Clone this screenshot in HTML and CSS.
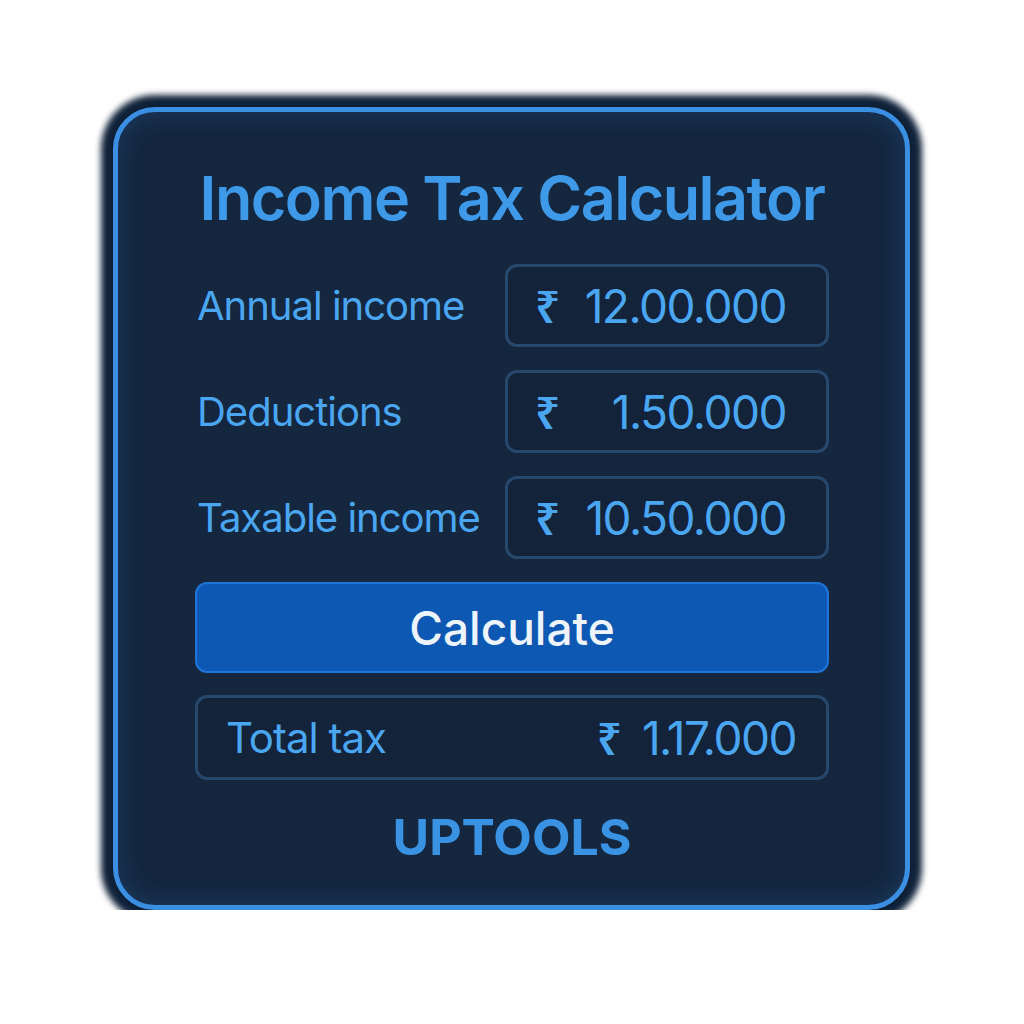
FILE: index.html
```html
<!DOCTYPE html>
<html lang="en">
<head>
<meta charset="utf-8">
<title>Income Tax Calculator</title>
<link rel="stylesheet" href="styles.css">
</head>
<body>
<div class="page">
  <div class="card">
    <h1 class="title">Income Tax Calculator</h1>
    <div class="rows">
      <div class="row">
        <span class="label">Annual income</span>
        <div class="field"><span class="cur">₹</span><span class="num">12.00.000</span></div>
      </div>
      <div class="row">
        <span class="label">Deductions</span>
        <div class="field"><span class="cur">₹</span><span class="num">1.50.000</span></div>
      </div>
      <div class="row">
        <span class="label">Taxable income</span>
        <div class="field"><span class="cur">₹</span><span class="num">10.50.000</span></div>
      </div>
    </div>
    <button class="btn">Calculate</button>
    <div class="total">
      <span class="label total-label">Total tax</span>
      <span class="total-val"><span class="cur">₹</span><span class="num">1.17.000</span></span>
    </div>
    <div class="brand">UPTOOLS</div>
  </div>
</div>
</body>
</html>
```

FILE: styles.css
```css
html, body {
  margin: 0;
  padding: 0;
  background: #ffffff;
}
body {
  font-family: Inter, "Noto Sans", "DejaVu Sans", sans-serif;
}
.page {
  padding: 107px 0 0 113px;
}
.card {
  box-sizing: border-box;
  width: 797px;
  height: 803px;
  border: 5px solid #3a8fe3;
  border-radius: 42px;
  background: #14273f;
  box-shadow: 0 0 0 2px #0e1e33, 0 0 6px 12px #10223a, inset 0 0 24px rgba(50, 120, 200, 0.25);
  padding: 50px 76px 0 77px;
  display: flex;
  flex-direction: column;
}
.card > * {
  flex-shrink: 0;
}
.title {
  margin: 0;
  font-size: 61px;
  line-height: 72px;
  font-weight: 600;
  color: #3e99e9;
  text-align: center;
  letter-spacing: -1.5px;
  white-space: nowrap;
}
.rows {
  margin-top: 30px;
  display: flex;
  flex-direction: column;
  gap: 23px;
}
.row {
  display: flex;
  align-items: center;
  justify-content: space-between;
}
.label {
  font-size: 40px;
  color: #4aa6f0;
  letter-spacing: -1px;
  padding-left: 2px;
  white-space: nowrap;
}
.field {
  box-sizing: border-box;
  width: 324px;
  height: 83px;
  border: 3px solid #27486d;
  border-radius: 12px;
  background: #13233a;
  display: flex;
  align-items: center;
  justify-content: space-between;
  padding: 0 40px 0 27px;
}
.cur {
  font-family: "Noto Sans", "DejaVu Sans", sans-serif;
  font-size: 44px;
  font-weight: 600;
  color: #4aa6f0;
}
.num {
  font-size: 46px;
  color: #4aa6f0;
  letter-spacing: -1.5px;
  white-space: nowrap;
}
.btn {
  margin-top: 23px;
  height: 91px;
  width: 100%;
  border: 2px solid #1f74d8;
  border-radius: 12px;
  background: #0c58b2;
  color: #eef4fb;
  font-family: Inter, "Noto Sans", sans-serif;
  font-size: 46px;
  font-weight: 500;
  cursor: pointer;
}
.total {
  box-sizing: border-box;
  margin-top: 22px;
  height: 85px;
  border: 3px solid #27486d;
  border-radius: 12px;
  background: #13233a;
  display: flex;
  align-items: center;
  justify-content: space-between;
  padding: 0 30px 0 26px;
}
.total-label {
  font-size: 42px;
}
.total-val {
  display: flex;
  align-items: center;
  gap: 20px;
}
.brand {
  margin-top: 27px;
  text-align: center;
  font-size: 50px;
  line-height: 60px;
  font-weight: 700;
  color: #3a92e2;
}
```
